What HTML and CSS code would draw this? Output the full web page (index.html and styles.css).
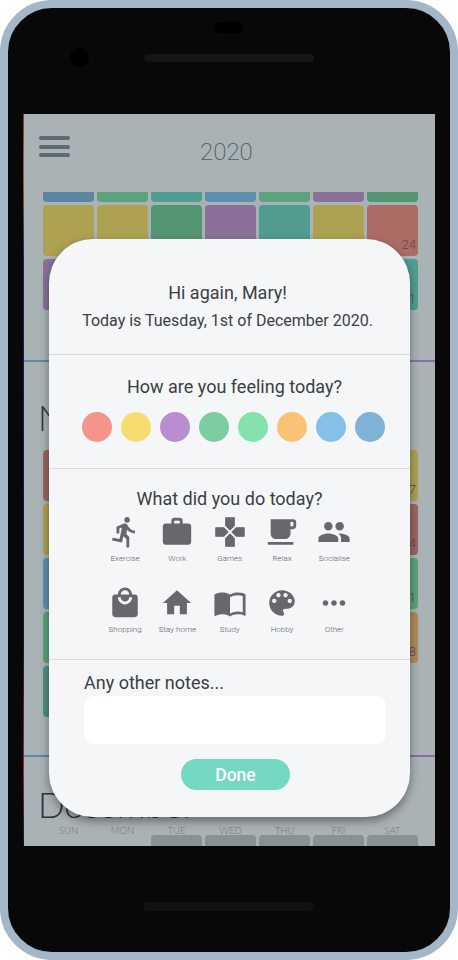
FILE: index.html
```html
<!DOCTYPE html>
<html lang="en">
<head>
    <meta charset="UTF-8">
    <meta name="viewport" content="width=device-width, initial-scale=1.0">
    <link rel="stylesheet" href="styles.css">
    <title>Mood Calendar</title>
</head>
<body>
    <div class="phone">
        <div class="bezel-top">
            <div class="sensor"></div>
            <div class="earpiece-row">
                <div class="camera"></div>
                <div class="speaker"></div>
            </div>
        </div>

        <div class="screen">
            <div class="app-header">
                <div class="hamburger"><span></span><span></span><span></span></div>
                <div class="year">2020</div>
            </div>

            <div class="month-grid october">
                <div class="cell cut blue-dark"></div>
                <div class="cell cut green"></div>
                <div class="cell cut teal"></div>
                <div class="cell cut blue"></div>
                <div class="cell cut green"></div>
                <div class="cell cut purple"></div>
                <div class="cell cut green-dark"></div>
                <div class="cell yellow"></div>
                <div class="cell yellow"></div>
                <div class="cell green-dark"></div>
                <div class="cell purple"></div>
                <div class="cell teal"></div>
                <div class="cell yellow"></div>
                <div class="cell red">24</div>
                <div class="cell purple"></div>
                <div class="cell green"></div>
                <div class="cell blue"></div>
                <div class="cell teal"></div>
                <div class="cell yellow"></div>
                <div class="cell green"></div>
                <div class="cell teal">31</div>
            </div>

            <div class="divider"></div>

            <h1 class="month-title">November</h1>
            <div class="month-grid">
                <div class="cell red-dark"></div>
                <div class="cell green"></div>
                <div class="cell teal"></div>
                <div class="cell blue"></div>
                <div class="cell green"></div>
                <div class="cell purple"></div>
                <div class="cell yellow">7</div>
                <div class="cell yellow"></div>
                <div class="cell green"></div>
                <div class="cell teal"></div>
                <div class="cell blue"></div>
                <div class="cell yellow"></div>
                <div class="cell purple"></div>
                <div class="cell red-dark">14</div>
                <div class="cell blue"></div>
                <div class="cell green"></div>
                <div class="cell purple"></div>
                <div class="cell teal"></div>
                <div class="cell yellow"></div>
                <div class="cell blue"></div>
                <div class="cell green">21</div>
                <div class="cell green"></div>
                <div class="cell orange"></div>
                <div class="cell teal"></div>
                <div class="cell green"></div>
                <div class="cell blue"></div>
                <div class="cell yellow"></div>
                <div class="cell orange">28</div>
                <div class="cell teal-dark"></div>
                <div class="cell green"></div>
            </div>

            <div class="divider divider-low"></div>

            <h1 class="month-title month-title-dec">December</h1>
            <div class="weekdays">
                <span>SUN</span><span>MON</span><span>TUE</span><span>WED</span><span>THU</span><span>FRI</span><span>SAT</span>
            </div>
            <div class="month-grid">
                <div class="blank"></div>
                <div class="blank"></div>
                <div class="cell empty"></div>
                <div class="cell empty"></div>
                <div class="cell empty"></div>
                <div class="cell empty"></div>
                <div class="cell empty"></div>
            </div>

            <div class="modal">
                <div class="modal-section greeting">
                    <p class="hello">Hi again, Mary!</p>
                    <p class="today">Today is Tuesday, 1st of December 2020.</p>
                </div>

                <div class="modal-section mood">
                    <h2 class="question mood-question">How are you feeling today?</h2>
                    <div class="mood-dots">
                        <span class="dot" style="background-color: #f4948a"></span>
                        <span class="dot" style="background-color: #f9dc70"></span>
                        <span class="dot" style="background-color: #b98ecf"></span>
                        <span class="dot" style="background-color: #7dcda2"></span>
                        <span class="dot" style="background-color: #84e2ac"></span>
                        <span class="dot" style="background-color: #f9c375"></span>
                        <span class="dot" style="background-color: #85c0e9"></span>
                        <span class="dot" style="background-color: #7fb3d6"></span>
                    </div>
                </div>

                <div class="modal-section activities">
                    <h2 class="question">What did you do today?</h2>
                    <div class="activity-grid">
                        <div class="activity">
                            <svg viewBox="0 0 24 24"><path d="M13.49 5.48c1.1 0 2-.9 2-2s-.9-2-2-2-2 .9-2 2 .9 2 2 2zm-3.6 13.9l1-4.4 2.1 2v6h2v-7.5l-2.1-2 .6-3c1.3 1.5 3.3 2.5 5.5 2.5v-2c-1.9 0-3.5-1-4.3-2.4l-1-1.6c-.4-.6-1-1-1.7-1-.3 0-.5.1-.8.1l-5.2 2.2v4.7h2v-3.4l1.8-.7-1.6 8.1-4.9-1-.4 2 7 1.4z"/></svg>
                            <span>Exercise</span>
                        </div>
                        <div class="activity">
                            <svg viewBox="0 0 24 24"><path d="M20 6h-4V4c0-1.11-.89-2-2-2h-4c-1.11 0-2 .89-2 2v2H4c-1.11 0-1.99.89-1.99 2L2 19c0 1.11.89 2 2 2h16c1.11 0 2-.89 2-2V8c0-1.11-.89-2-2-2zm-6 0h-4V4h4v2z"/></svg>
                            <span>Work</span>
                        </div>
                        <div class="activity">
                            <svg class="soft" viewBox="0 0 24 24"><path d="M15 7.5V2H9v5.5l3 3 3-3zM7.5 9H2v6h5.5l3-3-3-3zM9 16.5V22h6v-5.5l-3-3-3 3zM16.5 9l-3 3 3 3H22V9h-5.5z"/></svg>
                            <span>Games</span>
                        </div>
                        <div class="activity">
                            <svg viewBox="0 0 24 24"><path d="M2 21h18v-2H2v2zM20 8h-2V5h2v3zm0-5H4v10c0 2.21 1.79 4 4 4h6c2.21 0 4-1.79 4-4v-3h2c1.11 0 2-.89 2-2V5c0-1.11-.89-2-2-2z"/></svg>
                            <span>Relax</span>
                        </div>
                        <div class="activity">
                            <svg viewBox="0 0 24 24"><path d="M16 11c1.66 0 2.99-1.34 2.99-3S17.66 5 16 5c-1.66 0-3 1.34-3 3s1.34 3 3 3zm-8 0c1.66 0 2.99-1.34 2.99-3S9.66 5 8 5C6.34 5 5 6.34 5 8s1.34 3 3 3zm0 2c-2.33 0-7 1.17-7 3.5V19h14v-2.5c0-2.33-4.67-3.5-7-3.5zm8 0c-.29 0-.62.02-.97.05 1.16.84 1.97 1.97 1.97 3.45V19h6v-2.5c0-2.33-4.67-3.5-7-3.5z"/></svg>
                            <span>Socialise</span>
                        </div>
                        <div class="activity">
                            <svg viewBox="0 0 24 24"><path d="M19 6h-2c0-2.76-2.24-5-5-5S7 3.24 7 6H5c-1.1 0-1.99.9-1.99 2L3 20c0 1.1.9 2 2 2h14c1.1 0 2-.9 2-2V8c0-1.1-.9-2-2-2zm-7-3c1.66 0 3 1.34 3 3H9c0-1.66 1.34-3 3-3zm0 10c-2.76 0-5-2.24-5-5h2c0 1.66 1.34 3 3 3s3-1.34 3-3h2c0 2.76-2.24 5-5 5z"/></svg>
                            <span>Shopping</span>
                        </div>
                        <div class="activity">
                            <svg viewBox="0 0 24 24"><path d="M10 20v-6h4v6h5v-8h3L12 3 2 12h3v8z"/></svg>
                            <span>Stay home</span>
                        </div>
                        <div class="activity">
                            <svg viewBox="0 0 24 24"><path d="M21 5c-1.11-.35-2.33-.5-3.5-.5-1.95 0-4.05.4-5.5 1.5-1.45-1.1-3.55-1.5-5.5-1.5S2.45 4.9 1 6v14.65c0 .25.25.5.5.5.1 0 .15-.05.25-.05C3.1 20.45 5.05 20 6.5 20c1.95 0 4.05.4 5.5 1.5 1.35-.85 3.8-1.5 5.5-1.5 1.65 0 3.35.3 4.75 1.05.1.05.15.05.25.05.25 0 .5-.25.5-.5V6c-.6-.45-1.25-.75-2-1zm0 13.5c-1.1-.35-2.3-.5-3.5-.5-1.7 0-4.15.65-5.5 1.5V8c1.35-.85 3.8-1.5 5.5-1.5 1.2 0 2.4.15 3.5.5v11.5z"/></svg>
                            <span>Study</span>
                        </div>
                        <div class="activity">
                            <svg viewBox="0 0 24 24"><path d="M12 3c-4.97 0-9 4.03-9 9s4.03 9 9 9c.83 0 1.5-.67 1.5-1.5 0-.39-.15-.74-.39-1.01-.23-.26-.38-.61-.38-.99 0-.83.67-1.5 1.5-1.5H16c2.76 0 5-2.24 5-5 0-4.42-4.03-8-9-8zm-5.5 9c-.83 0-1.5-.67-1.5-1.5S5.67 9 6.5 9 8 9.67 8 10.5 7.33 12 6.5 12zm3-4C8.67 8 8 7.33 8 6.5S8.67 5 9.5 5s1.5.67 1.5 1.5S10.33 8 9.5 8zm5 0c-.83 0-1.5-.67-1.5-1.5S13.67 5 14.5 5s1.5.67 1.5 1.5S15.33 8 14.5 8zm3 4c-.83 0-1.5-.67-1.5-1.5S16.67 9 17.5 9s1.5.67 1.5 1.5-.67 1.5-1.5 1.5z"/></svg>
                            <span>Hobby</span>
                        </div>
                        <div class="activity">
                            <svg viewBox="0 0 24 24"><path d="M6 10c-1.1 0-2 .9-2 2s.9 2 2 2 2-.9 2-2-.9-2-2-2zm12 0c-1.1 0-2 .9-2 2s.9 2 2 2 2-.9 2-2-.9-2-2-2zm-6 0c-1.1 0-2 .9-2 2s.9 2 2 2 2-.9 2-2-.9-2-2-2z"/></svg>
                            <span>Other</span>
                        </div>
                    </div>
                </div>

                <div class="notes">
                    <label class="notes-label" for="notesInput">Any other notes...</label>
                    <input class="notes-input" id="notesInput" type="text">
                    <button class="done-btn">Done</button>
                </div>
            </div>
        </div>

        <div class="bezel-bottom">
            <div class="speaker speaker-low"></div>
        </div>
    </div>
</body>
</html>
```

FILE: styles.css
```css
body {
    margin: 0;
    background-color: #fff;
    font-family: Roboto, 'Liberation Sans', sans-serif;
}

.phone {
    box-sizing: border-box;
    width: 458px;
    height: 960px;
    border: 8px solid #a3b7c8;
    border-radius: 52px;
    background-color: #080808;
    overflow: hidden;
}

.bezel-top {
    box-sizing: border-box;
    height: 106px;
    padding-top: 14px;
}

.sensor {
    width: 29px;
    height: 11px;
    margin-left: 206px;
    border-radius: 6px;
    background-color: #000;
}

.earpiece-row {
    display: flex;
    align-items: center;
    gap: 55px;
    margin-top: 15px;
    padding-left: 62px;
}

.camera {
    width: 19px;
    height: 19px;
    border-radius: 50%;
    background-color: #000;
}

.speaker {
    width: 170px;
    height: 8px;
    border-radius: 4px;
    background-color: #151515;
}

.screen {
    position: relative;
    width: 411px;
    height: 732px;
    margin-left: 15px;
    border-left: 1px solid;
    border-image: linear-gradient(to bottom, #a02050, #a06020 8%, #202060 20%, #101030 70%, #a02040 90%, #101030) 1;
    background-color: #a9b2b4;
    overflow: hidden;
}

.bezel-bottom {
    padding: 56px 0 0 136px;
}

.speaker-low {
    height: 9px;
    background-color: #111;
}

/* calendar behind the dialog */
.app-header {
    display: flex;
    height: 78px;
    padding-left: 15px;
}

.hamburger {
    display: flex;
    flex-direction: column;
    gap: 4.5px;
    width: 31px;
    margin-top: 22px;
}

.hamburger span {
    height: 4px;
    border-radius: 2px;
    background-color: #5d6a74;
}

.year {
    margin: 24px 0 0 130px;
    color: #555c61;
    font-size: 24px;
    font-weight: 200;
    line-height: 28px;
}

.month-grid {
    display: grid;
    grid-template-columns: repeat(7, 51px);
    grid-auto-rows: 51px;
    gap: 3px;
    margin-left: 19px;
}

.october {
    grid-template-rows: 10px;
}

.cell {
    display: flex;
    align-items: flex-end;
    justify-content: flex-end;
    padding: 0 2px 4px 0;
    border-radius: 4px;
    box-sizing: border-box;
    color: #5a4a4a;
    font-size: 13px;
    font-weight: 300;
    line-height: 14px;
}

.cut {
    border-radius: 0 0 4px 4px;
}

.blue-dark { background-color: #5a85a3; }
.blue { background-color: #5f8fae; }
.green { background-color: #5aa37d; }
.green-dark { background-color: #559672; }
.teal { background-color: #519c90; }
.teal-dark { background-color: #4f8f80; }
.purple { background-color: #8b7199; }
.yellow { background-color: #ada152; }
.red { background-color: #aa6c64; }
.red-dark { background-color: #9a6560; }
.orange { background-color: #b08a5a; }
.empty { background-color: #8a9192; }

.divider {
    height: 2px;
    margin-top: 50px;
    background: linear-gradient(to right, #5b8ba8, #8a6fa0);
}

.divider-low {
    margin-top: 38px;
}

.month-title {
    margin: 0;
    padding: 34px 0 12px 14px;
    color: #2e3438;
    font-family: Lato, sans-serif;
    font-size: 35px;
    font-weight: 300;
    line-height: 42px;
}

.month-title-dec {
    padding: 26px 0 0 14px;
}

.weekdays {
    display: grid;
    grid-template-columns: repeat(7, 51px);
    gap: 3px;
    height: 10px;
    margin-left: 19px;
    color: #6f7a7c;
    font-family: Lato, sans-serif;
    font-size: 9.5px;
    font-weight: 300;
    line-height: 12px;
    text-align: center;
}

/* daily check-in dialog */
.modal {
    position: absolute;
    left: 25px;
    top: 125px;
    width: 361px;
    height: 578px;
    border-radius: 44px;
    background-color: #f4f6f8;
    box-shadow: 0 4px 10px rgba(0, 0, 0, 0.4);
    color: #3b3f44;
    text-align: center;
}

.modal-section {
    box-sizing: border-box;
    border-bottom: 1px solid #d8dadd;
}

.greeting {
    height: 116px;
    padding: 44px 4px 0 0;
}

.hello {
    margin: 0;
    font-size: 18px;
    line-height: 20px;
}

.today {
    margin: 9px 0 0;
    font-size: 16px;
    line-height: 18px;
}

.mood {
    height: 114px;
    padding-top: 22px;
}

.question {
    margin: 0;
    font-size: 18px;
    font-weight: 400;
    line-height: 20px;
}

.mood-question {
    padding-left: 10px;
}

.mood-dots {
    display: flex;
    justify-content: center;
    gap: 9px;
    margin: 15px 0 0 8px;
}

.dot {
    width: 30px;
    height: 30px;
    border-radius: 50%;
}

.activities {
    height: 191px;
    padding-top: 20px;
}

.activity-grid {
    display: grid;
    grid-template-columns: repeat(5, 52.3px);
    row-gap: 22px;
    margin: 6px 0 0 50px;
}

.activity {
    display: flex;
    flex-direction: column;
    align-items: center;
    color: #606266;
    font-size: 8px;
    font-weight: 300;
    line-height: 10px;
    white-space: nowrap;
}

.activity svg {
    width: 34px;
    height: 34px;
    margin-bottom: 5px;
    fill: #66686c;
}

.activity svg.soft {
    stroke: #66686c;
    stroke-width: 0.8;
    stroke-linejoin: round;
}

.notes {
    padding: 13px 24px 0 35px;
    text-align: left;
}

.notes-label {
    display: block;
    font-size: 18px;
    line-height: 20px;
}

.notes-input {
    display: block;
    box-sizing: border-box;
    width: 302px;
    height: 48px;
    margin-top: 3px;
    border: none;
    border-radius: 10px;
    background-color: #fff;
}

.done-btn {
    display: block;
    width: 109px;
    height: 31px;
    margin: 15px 0 0 97px;
    padding: 0;
    border: none;
    border-radius: 16px;
    background-color: #75d8c2;
    color: #fff;
    font-family: Roboto, sans-serif;
    font-size: 17.5px;
    font-weight: 500;
}
```
